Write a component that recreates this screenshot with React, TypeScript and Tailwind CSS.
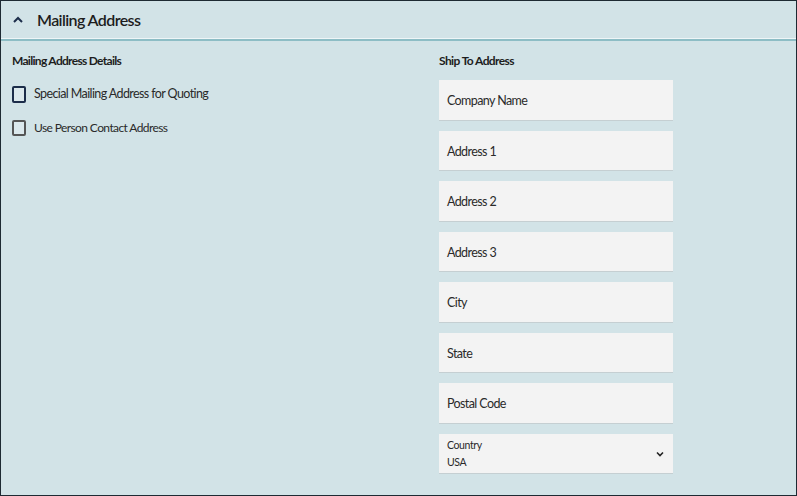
import React from "react";

const fields = ["Company Name", "Address 1", "Address 2", "Address 3", "City", "State", "Postal Code"];

export default function App() {
  return (
    <div
      className="w-[797px] h-[496px] bg-[#d2e3e7] border border-[#1e2a33] text-[#222] overflow-hidden flex flex-col"
      style={{ fontFamily: "Lato, 'Noto Sans', sans-serif" }}
    >
      <div className="h-[37px] flex items-center shrink-0">
        <svg width="14" height="14" viewBox="0 0 14 14" className="ml-[10px]">
          <path d="M3 9 L7 5 L11 9" fill="none" stroke="#1c2d4a" strokeWidth="2" />
        </svg>
        <span className="ml-[12px] text-[16px] font-semibold text-[#1d1d1d] tracking-[-0.6px]">Mailing Address</span>
      </div>
      <div className="h-px bg-[#eef5f7] shrink-0" />
      <div className="h-[2px] bg-[#8dbdc5] shrink-0" />
      <div className="flex pt-[12px]">
        <div className="w-[438px] pl-[11px]">
          <div className="text-[12px] font-bold tracking-[-0.7px] text-[#1d1d1d] h-[16px] leading-[16px]">Mailing Address Details</div>
          <div className="mt-[16px] flex items-center h-[18px]">
            <div className="w-[14px] h-[17px] border-2 border-[#1c2d4a] rounded-[2px] bg-[#dbe8ec]" />
            <span className="ml-[8px] text-[12.5px] text-[#2a2a2a] tracking-[-0.6px]">Special Mailing Address for Quoting</span>
          </div>
          <div className="mt-[16px] flex items-center h-[18px]">
            <div className="w-[14px] h-[16px] border-2 border-[#555] rounded-[2px] bg-[#dbe8ec]" />
            <span className="ml-[8px] text-[12px] text-[#2a2a2a] tracking-[-0.6px]">Use Person Contact Address</span>
          </div>
        </div>
        <div className="flex flex-col">
          <div className="text-[12px] font-bold tracking-[-0.6px] text-[#1d1d1d] h-[16px] leading-[16px]">Ship To Address</div>
          <div className="mt-[11px] flex flex-col gap-[10px]">
            {fields.map((f) => (
              <div
                key={f}
                className="w-[234px] h-[40.5px] bg-[#f3f3f3] border-b border-[#c5cfd2] flex items-center pl-[8px] pt-[4px] text-[12.5px] text-[#2a2a2a] tracking-[-0.6px]"
              >
                {f}
              </div>
            ))}
            <div className="w-[234px] h-[40.5px] bg-[#f3f3f3] border-b border-[#c5cfd2] flex items-center justify-between pl-[8px] pr-[8px] pt-[1px]">
              <div className="flex flex-col leading-[17px] tracking-[-0.4px]">
                <span className="text-[10.5px] text-[#2a2a2a]">Country</span>
                <span className="text-[10.5px] text-[#2a2a2a]">USA</span>
              </div>
              <svg width="10" height="10" viewBox="0 0 10 10">
                <path d="M2 3.5 L5 6.5 L8 3.5" fill="none" stroke="#222" strokeWidth="1.6" />
              </svg>
            </div>
          </div>
        </div>
      </div>
    </div>
  );
}
